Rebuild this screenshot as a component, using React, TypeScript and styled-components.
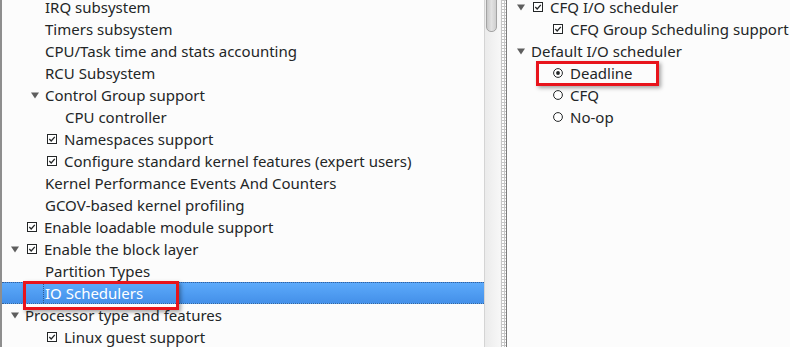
import React from "react";
import styled, { createGlobalStyle } from "styled-components";

const GlobalStyle = createGlobalStyle`
  html, body {
    margin: 0;
    padding: 0;
    background: #fcfcfc;
  }
  body {
    font-family: "Noto Sans", "Open Sans", sans-serif;
    font-size: 15px;
    color: #232627;
  }
`;

interface Item {
  level: number;
  text: string;
  expanded?: boolean;
  check?: boolean;
  radio?: "on" | "off";
  selected?: boolean;
  highlight?: { left: number; top: number; width: number; height: number };
}

const leftItems: Item[] = [
  { level: 1, text: "IRQ subsystem" },
  { level: 1, text: "Timers subsystem" },
  { level: 1, text: "CPU/Task time and stats accounting" },
  { level: 1, text: "RCU Subsystem" },
  { level: 1, text: "Control Group support", expanded: true },
  { level: 2, text: "CPU controller" },
  { level: 1, text: "Namespaces support", check: true },
  { level: 1, text: "Configure standard kernel features (expert users)", check: true },
  { level: 1, text: "Kernel Performance Events And Counters" },
  { level: 1, text: "GCOV-based kernel profiling" },
  { level: 0, text: "Enable loadable module support", check: true },
  { level: 0, text: "Enable the block layer", expanded: true, check: true },
  { level: 1, text: "Partition Types" },
  {
    level: 1,
    text: "IO Schedulers",
    selected: true,
    highlight: { left: 21, top: -2, width: 156, height: 29 },
  },
  { level: 0, text: "Processor type and features", expanded: true },
  { level: 1, text: "Linux guest support", check: true },
];

const rightItems: Item[] = [
  { level: 0, text: "CFQ I/O scheduler", expanded: true, check: true },
  { level: 1, text: "CFQ Group Scheduling support", check: true },
  { level: 0, text: "Default I/O scheduler", expanded: true },
  {
    level: 1,
    text: "Deadline",
    radio: "on",
    highlight: { left: 29, top: -2, width: 123, height: 25 },
  },
  { level: 1, text: "CFQ", radio: "off" },
  { level: 1, text: "No-op", radio: "off" },
];

const Window = styled.div`
  display: flex;
  width: 790px;
  height: 347px;
  overflow: hidden;
  background: #fcfcfc;
`;

const Panel = styled.section<{ $grow?: boolean; $edge: string }>`
  display: flex;
  flex: ${(p) => (p.$grow ? "1" : "none")};
  width: ${(p) => (p.$grow ? "auto" : "498px")};
  border-left: ${(p) => p.$edge};
  background: #fcfcfc;
  min-width: 0;
`;

const Tree = styled.div<{ $pad: number }>`
  flex: 1;
  position: relative;
  overflow: hidden;
  display: flex;
  flex-direction: column;
  margin-top: -4px;

  --pad: ${(p) => p.$pad}px;
`;

const Row = styled.div<{ $level: number; $selected?: boolean }>`
  position: relative;
  display: flex;
  align-items: center;
  flex: none;
  height: 22px;
  box-sizing: border-box;
  padding-left: calc(var(--pad) + ${(p) => p.$level * 20}px);
  white-space: nowrap;
  color: ${(p) => (p.$selected ? "#ffffff" : "#232627")};
  background: ${(p) =>
    p.$selected ? "linear-gradient(#5caafb, #4490e9)" : "transparent"};
  border-top: 1px dotted ${(p) => (p.$selected ? "#35639d" : "transparent")};
  border-bottom: 1px dotted ${(p) => (p.$selected ? "#35639d" : "transparent")};
`;

const Branch = styled.span`
  flex: none;
  width: 20px;
  height: 100%;
  display: flex;
  align-items: center;
  padding-left: 6px;
  box-sizing: border-box;
`;

const Label = styled.span<{ $focus?: boolean }>`
  display: flex;
  align-items: center;
  height: 100%;
  padding-left: ${(p) => (p.$focus ? "1px" : "0")};
  margin-left: ${(p) => (p.$focus ? "-2px" : "0")};
  border-left: ${(p) => (p.$focus ? "1px dotted #2f5a90" : "none")};
`;

const Mark = styled.span`
  flex: none;
  display: flex;
  margin: 0 7px 0 2px;
`;

const Highlight = styled.div`
  position: absolute;
  box-sizing: border-box;
  border: 3px solid #e8141c;
  box-shadow: 2px 2px 4px rgba(0, 0, 0, 0.35);
  pointer-events: none;
`;

const ScrollBar = styled.div`
  flex: none;
  width: 16px;
  box-sizing: border-box;
  border-left: 1px solid #d4d4d4;
  background: linear-gradient(90deg, #ebebeb, #f7f7f7);
  padding: 0 3px 0 1px;
`;

const Thumb = styled.div`
  height: 42px;
  margin-top: -10px;
  box-sizing: border-box;
  border: 1px solid #a3a3a3;
  border-radius: 5px;
  background: linear-gradient(90deg, #c9c9c9, #e2e2e2, #cfcfcf);
`;

const Splitter = styled.div`
  flex: none;
  width: 6px;
  background:
    linear-gradient(#c6c6c6 1px, transparent 1px) 0 0 / 3px 3px,
    linear-gradient(90deg, #c6c6c6 1px, #ffffff 1px) 0 0 / 3px 3px;
  border-left: 1px solid #f4f4f4;
  box-sizing: border-box;
`;

const Arrow = () => (
  <svg width="8" height="7" viewBox="0 0 8 7">
    <polygon points="0,0.5 8,0.5 4,6.5" fill="#5e5e5e" />
  </svg>
);

const CheckBox = () => (
  <svg width="10" height="10" viewBox="0 0 10 10">
    <rect x="0.5" y="0.5" width="9" height="9" fill="#fff" stroke="#232627" />
    <polyline points="2.3,5 4.2,7 7.8,2.8" fill="none" stroke="#232627" strokeWidth="1.3" />
  </svg>
);

const Radio = ({ on }: { on: boolean }) => (
  <svg width="10" height="10" viewBox="0 0 10 10">
    <circle cx="5" cy="5" r="4.4" fill="#fff" stroke="#232627" />
    {on && <circle cx="5" cy="5" r="1.9" fill="#232627" />}
  </svg>
);

const TreeRow = ({ item }: { item: Item }) => (
  <Row $level={item.level} $selected={item.selected}>
    <Branch>{item.expanded && <Arrow />}</Branch>
    {item.check && (
      <Mark>
        <CheckBox />
      </Mark>
    )}
    {item.radio && (
      <Mark>
        <Radio on={item.radio === "on"} />
      </Mark>
    )}
    <Label $focus={item.selected}>{item.text}</Label>
    {item.highlight && (
      <Highlight
        style={{
          left: item.highlight.left,
          top: item.highlight.top,
          width: item.highlight.width,
          height: item.highlight.height,
        }}
      />
    )}
  </Row>
);

export default function App() {
  return (
    <>
      <GlobalStyle />
      <Window>
        <Panel $edge="2px solid #8e8e8e">
          <Tree $pad={3}>
            {leftItems.map((item) => (
              <TreeRow key={item.text} item={item} />
            ))}
          </Tree>
          <ScrollBar>
            <Thumb />
          </ScrollBar>
        </Panel>
        <Splitter />
        <Panel $grow $edge="1px solid #7a7a7a">
          <Tree $pad={4}>
            {rightItems.map((item) => (
              <TreeRow key={item.text} item={item} />
            ))}
          </Tree>
        </Panel>
      </Window>
    </>
  );
}
